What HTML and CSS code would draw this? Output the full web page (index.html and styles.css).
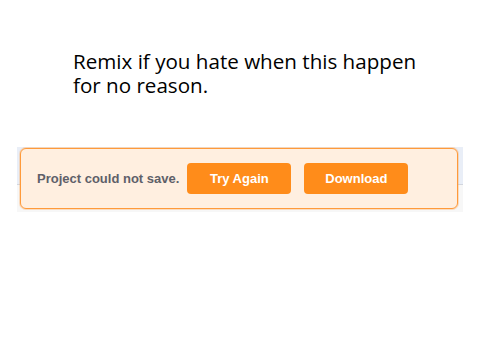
FILE: index.html
```html
<!DOCTYPE html>
<html>
<head>
<meta charset="utf-8">
<link rel="stylesheet" href="styles.css">
</head>
<body>
<h1 class="caption">Remix if you hate when this happen<br>for no reason.</h1>
<div class="stage">
  <div class="backdrop">
    <div class="alert">
      <span class="message">Project could not save.</span>
      <button class="btn">Try Again</button>
      <button class="btn">Download</button>
    </div>
  </div>
</div>
</body>
</html>
```
FILE: styles.css
```css
html, body {
  margin: 0;
  padding: 0;
  background: #ffffff;
  width: 480px;
  height: 360px;
  overflow: hidden;
}
.caption {
  margin: 0;
  padding: 49px 0 0 73px;
  font-family: "Open Sans", "Noto Sans", sans-serif;
  font-weight: 400;
  font-size: 20.6px;
  line-height: 24px;
  color: #000;
}
.stage {
  padding: 50px 0 0 17px;
}
.backdrop {
  width: 446px;
  height: 65px;
  background: linear-gradient(to bottom, #e9eef7 0, #e9eef7 37px, #d2d6de 37px, #d2d6de 38px, #f7f7f7 38px);
  padding: 1px 0 0 3px;
  box-sizing: border-box;
}
.alert {
  width: 438px;
  height: 61px;
  box-sizing: border-box;
  background: #ffefe0;
  border: 1px solid #ff9a3a;
  border-radius: 6px;
  box-shadow: 0 0 0 1px rgba(255, 170, 90, 0.35);
  display: flex;
  align-items: center;
  padding: 0 0 0 16px;
  font-family: "Liberation Sans", Arial, sans-serif;
}
.message {
  font-size: 13px;
  font-weight: 700;
  color: #5e6069;
  margin-right: 8px;
}
.btn {
  width: 104px;
  height: 31px;
  border: 0;
  border-radius: 4px;
  background: #ff8c1a;
  color: #ffffff;
  font-family: "Liberation Sans", Arial, sans-serif;
  font-size: 13px;
  font-weight: 700;
  margin-right: 13px;
  padding: 0;
}
```
